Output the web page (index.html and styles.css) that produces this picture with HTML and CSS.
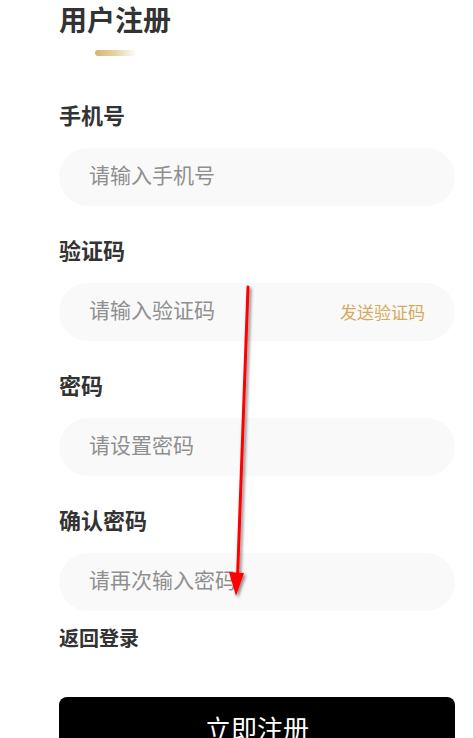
FILE: index.html
```html
<!DOCTYPE html>
<html lang="zh-CN">
<head>
<meta charset="utf-8">
<title>用户注册</title>
<link rel="stylesheet" href="styles.css">
</head>
<body>
<div class="page">
  <h1 class="title">用户注册</h1>
  <div class="title-bar"></div>

  <div class="group first">
    <div class="label">手机号</div>
    <div class="field"><input class="input" type="text" placeholder="请输入手机号"></div>
  </div>
  <div class="group">
    <div class="label">验证码</div>
    <div class="field"><input class="input" type="text" placeholder="请输入验证码"><span class="send">发送验证码</span></div>
  </div>
  <div class="group">
    <div class="label">密码</div>
    <div class="field"><input class="input" type="password" placeholder="请设置密码"></div>
  </div>
  <div class="group">
    <div class="label">确认密码</div>
    <div class="field"><input class="input" type="password" placeholder="请再次输入密码"></div>
  </div>

  <div class="back">返回登录</div>
  <div class="submit">立即注册</div>

  <svg class="arrow" width="473" height="738" viewBox="0 0 473 738">
    <defs>
      <filter id="sh" x="-50%" y="-10%" width="200%" height="120%">
        <feDropShadow dx="2" dy="2" stdDeviation="1.5" flood-color="#000" flood-opacity="0.45"/>
      </filter>
    </defs>
    <g filter="url(#sh)">
      <line x1="248" y1="287" x2="237.5" y2="578" stroke="#ff0000" stroke-width="3" stroke-linecap="round"/>
      <polygon points="229,572 244,573 236,596" fill="#ff0000"/>
    </g>
  </svg>
</div>
</body>
</html>
```

FILE: styles.css
```css
html, body {
  margin: 0;
  padding: 0;
  background: #ffffff;
}

.page {
  position: relative;
  width: 396px;
  padding: 0 0 40px 59px;
  font-family: "Noto Sans CJK SC", "Noto Sans", sans-serif;
  color: #333333;
}

.title {
  margin: 0;
  font-size: 28px;
  line-height: 38px;
  font-weight: 700;
  color: #333333;
}

.title-bar {
  margin: 12px 0 0 36px;
  width: 42px;
  height: 6px;
  border-radius: 3px;
  background: linear-gradient(90deg, #d9b36a 0%, #e8d3a8 50%, rgba(255, 255, 255, 0) 100%);
}

.group {
  margin-top: 28px;
}

.group.first {
  margin-top: 43px;
}

.label {
  font-size: 22px;
  line-height: 30px;
  font-weight: 700;
  color: #333333;
}

.field {
  box-sizing: border-box;
  margin-top: 19px;
  height: 58px;
  border-radius: 29px;
  background: #f9f9f9;
  display: flex;
  align-items: center;
  padding: 0 30px 6px 30px;
}

.input {
  flex: 1;
  min-width: 0;
  border: none;
  outline: none;
  background: transparent;
  padding: 0;
  font-family: "Noto Sans CJK SC", "Noto Sans", sans-serif;
  font-size: 21px;
  color: #333333;
}

.input::placeholder {
  color: #8f8f8f;
}

.send {
  font-size: 17px;
  color: #d6a95c;
  white-space: nowrap;
  padding-top: 4px;
}

.back {
  margin-top: 13px;
  font-size: 20px;
  line-height: 28px;
  font-weight: 700;
  color: #333333;
}

.submit {
  margin-top: 45px;
  height: 64px;
  line-height: 62px;
  border-radius: 8px;
  background: #000000;
  color: #ffffff;
  text-align: center;
  font-size: 26px;
}

.arrow {
  position: absolute;
  left: 0;
  top: 0;
  pointer-events: none;
}
```
